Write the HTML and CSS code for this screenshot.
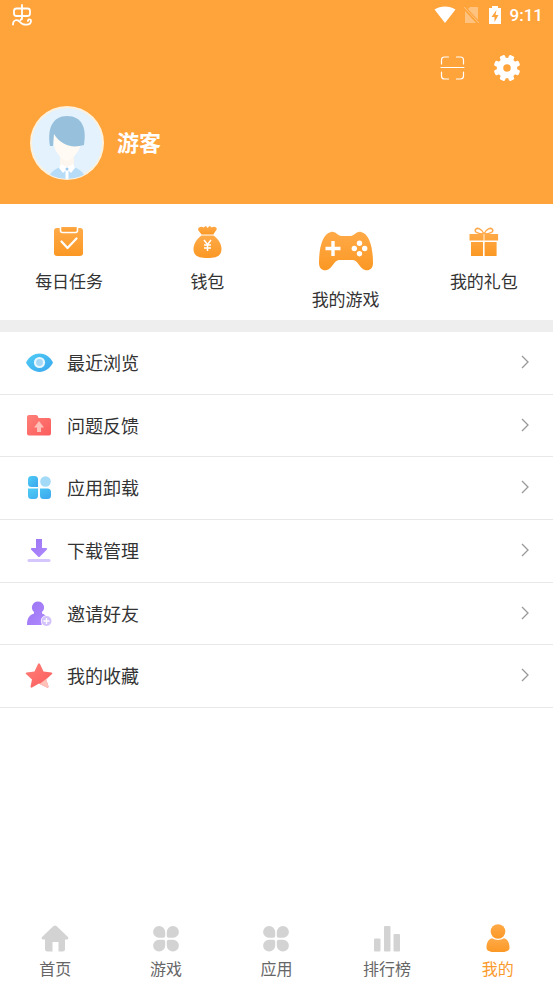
FILE: index.html
```html
<!DOCTYPE html>
<html lang="zh-CN">
<head>
<meta charset="utf-8">
<meta name="viewport" content="width=device-width, initial-scale=1">
<title>我的</title>
<link rel="stylesheet" href="styles.css">
</head>
<body>
<svg class="defs" width="0" height="0" aria-hidden="true">
  <defs>
    <linearGradient id="orange" x1="0" y1="0" x2="0" y2="1"><stop offset="0" stop-color="#ffaa48"/><stop offset="1" stop-color="#fb9824"/></linearGradient>
    <linearGradient id="blue" x1="0" y1="0" x2="1" y2="1"><stop offset="0" stop-color="#4fcdf5"/><stop offset="1" stop-color="#3ba6ee"/></linearGradient>
    <linearGradient id="red" x1="0" y1="0" x2="1" y2="1"><stop offset="0" stop-color="#ff8078"/><stop offset="1" stop-color="#fb5c5c"/></linearGradient>
    <linearGradient id="purple" x1="0" y1="0" x2="1" y2="1"><stop offset="0" stop-color="#9b74f2"/><stop offset="1" stop-color="#b08aff"/></linearGradient>
  </defs>
</svg>

<header class="header">
  <div class="status">
    <svg width="22" height="24" viewBox="0 0 22 24" fill="none" stroke="#fff" stroke-width="1.800" stroke-linecap="round" stroke-linejoin="round">
      <rect x="3" y="5.500" width="16" height="7.500" rx="2.500"/>
      <path d="M11 2v14M2 21.500c0-5 4.500-5.500 7-2.500 3 4 11 3.500 11-1 0-2.500-3.500-2-3 0M11 15.500l-1.500 1.500"/>
    </svg>
    <div class="status-right">
      <svg width="22" height="20" viewBox="0 0 22 20"><path d="M0.500 4.500C6.500 0.500 15.500 0.500 21.500 4.500L11 18Z" fill="#fff"/></svg>
      <svg width="16" height="20" viewBox="0 0 16 20"><path d="M6 2h8v13L4 4ZM1 6l11 12H1Z" fill="#fff" opacity=".35"/><path d="M0 2l15 16" stroke="#fff" stroke-width="1" opacity=".35"/></svg>
      <svg width="14" height="20" viewBox="0 0 14 20"><path d="M4 1h6v2h3v16H1V3h3Z" fill="#fff"/><path d="M8.500 5L3.500 12h3v5l4-7h-3Z" fill="#ffa33b"/></svg>
      <span class="clock">9:11</span>
    </div>
  </div>
  <div class="tools">
    <button class="icon-button" type="button" aria-label="扫一扫">
      <svg width="26" height="26" viewBox="0 0 26 26" fill="none" stroke="#fff" stroke-width="1.200" stroke-linecap="round">
        <path d="M2.500 9V5q0-3 3-3h4M17.500 2h4q3 0 3 3v4M24.500 17v4q0 3-3 3h-4M9.500 24h-4q-3 0-3-3v-4M2 12.500h23"/>
      </svg>
    </button>
    <button class="icon-button" type="button" aria-label="设置">
      <svg width="28" height="28" viewBox="-14 -14 28 28" fill="#fff">
        <circle r="7" fill="none" stroke="#fff" stroke-width="6.500"/>
        <g id="teeth" transform="rotate(22.500)"><rect x="-2.800" y="-13.300" width="5.600" height="6" rx="1.600"/><rect x="-2.800" y="7.300" width="5.600" height="6" rx="1.600"/><rect x="-13.300" y="-2.800" width="6" height="5.600" rx="1.600"/><rect x="7.300" y="-2.800" width="6" height="5.600" rx="1.600"/></g>
        <use href="#teeth" transform="rotate(45)"/>
      </svg>
    </button>
  </div>
  <div class="profile">
    <svg class="avatar" width="74" height="74" viewBox="0 0 74 74">
      <clipPath id="face"><circle cx="37" cy="37" r="36"/></clipPath>
      <circle cx="37" cy="37" r="37" fill="#fdf1dc"/>
      <circle cx="37" cy="37" r="35" fill="#e3f2fd"/>
      <g clip-path="url(#face)">
        <path d="M30 46h14v16H30Z" fill="#fcf6ee"/>
        <path d="M23 28q0 15 5 20 5 7 9 7t9-7q5-5 6-18L40 20Z" fill="#fffaf3"/>
        <path d="M20 40C17 22 23 10 37 10c15 0 20 12 17 29-13 4-24-1-30-11l-1 12Z" fill="#97c0dd"/>
        <path d="M19 70q4-7 12-9l6 5 6-5q8 2 12 9-6 5-18 5t-18-5Z" fill="#b7dcf8"/>
        <path d="M31 58l6 3 6-3 2 4-4 5-4-4-4 4-4-5Z" fill="#fff"/>
        <path d="M37 63v11" stroke="#fff" stroke-width="3"/>
        <circle cx="37" cy="63" r="1.500" fill="#9dcbed"/>
      </g>
    </svg>
    <h1 class="name">游客</h1>
  </div>
</header>

<main class="main">
  <nav class="actions" aria-label="快捷入口">
    <a class="action" href="#tasks">
      <svg width="36" height="36" viewBox="0 0 36 36">
        <rect x="3" y="4" width="29" height="28" rx="3" fill="url(#orange)"/>
        <path d="M9.500 3v3.500q0 2 2 2h13q2 0 2-2V3" fill="url(#orange)" stroke="#fff" stroke-width="1.600"/>
        <path d="M10.500 17.500l6 6.500 9-9.500" fill="none" stroke="#fff" stroke-width="2.200" stroke-linecap="round" stroke-linejoin="round"/>
      </svg>
      <span>每日任务</span>
    </a>
    <a class="action" href="#wallet">
      <svg width="36" height="36" viewBox="0 0 36 36">
        <path d="M12.500 10.500C11 8 8 6 9.500 4q2.500-2 5.500-.5.500-1.500 2-1.500l1.500 2L20.500 2q1.500 0 2 1.500 3-1.500 5 .5c1 2-2 4-3 6.500Z" fill="url(#orange)"/>
        <path d="M12.500 11.500h12c4.500 3 8 8.500 8 13.500 0 7-5 9-14 9s-14-2-14-9c0-5 3.500-10.500 8-13.500Z" fill="url(#orange)"/>
        <path d="M15 16l3.500 4.500L22 16M18.500 20.500V27M15 21h7M15 24h7" fill="none" stroke="#fff" stroke-width="1.500"/>
      </svg>
      <span>钱包</span>
    </a>
    <a class="action" href="#games">
      <svg width="56" height="54" viewBox="0 0 56 54">
        <path d="M13 8c4-1 6 3 10 4h10c4-1 6-5 10-4 9 2 12 17 12 31 0 6-4 8-8 7-5-1-7-10-12-10H21c-5 0-7 9-12 10-4 1-8-1-8-7C1 25 4 10 13 8Z" fill="url(#orange)"/>
        <path d="M15 17v15M7.500 24.500h15" stroke="#fff" stroke-width="3.400"/>
        <g fill="#fff"><circle cx="41.500" cy="19.300" r="2.700"/><circle cx="41.500" cy="29.700" r="2.700"/><circle cx="36.300" cy="24.500" r="2.700"/><circle cx="46.700" cy="24.500" r="2.700"/></g>
      </svg>
      <span>我的游戏</span>
    </a>
    <a class="action" href="#gifts">
      <svg width="36" height="36" viewBox="0 0 36 36">
        <path d="M18 10C12 10 8 8 9.500 5.500S16 5 18 10c2-5 7-7 8.500-4.500S24 10 18 10Z" fill="none" stroke="#ffa94a" stroke-width="1.500"/>
        <path d="M3.500 10H17v6.500H3.500ZM18.600 10h13.500v6.500H18.600ZM5 18h12v14H5ZM18.600 18h12v14h-12Z" fill="url(#orange)"/>
        <path d="M17 10h2v6.500h-2Z" fill="#ffcb8c"/>
      </svg>
      <span>我的礼包</span>
    </a>
  </nav>

  <ul class="menu">
    <li><a class="row" href="#recent">
      <svg width="28" height="28" viewBox="0 0 28 28"><path d="M1 14.500C7 2.500 22 2.500 28 14.500 22 27 7 27 1 14.500Z" fill="url(#blue)"/><circle cx="14.500" cy="14.500" r="5.600" fill="#e9f7fe"/><circle cx="14.500" cy="14.500" r="3.400" fill="#a5d8f7"/></svg>
      <span>最近浏览</span><svg class="chevron" width="10" height="16" viewBox="0 0 10 16"><path d="M2 2l6 6-6 6"/></svg></a></li>
    <li><a class="row" href="#feedback">
      <svg width="28" height="28" viewBox="0 0 28 28"><path d="M2 6q0-2 2-2h7q1.500 0 2 1.500l.5 1.500H24q2 0 2 2v13.500q0 2-2 2H4q-2 0-2-2Z" fill="url(#red)"/><path d="M14 10l5 6.500h-3V21h-4v-4.500H9Z" fill="#ffc0b9"/></svg>
      <span>问题反馈</span><svg class="chevron" width="10" height="16" viewBox="0 0 10 16"><path d="M2 2l6 6-6 6"/></svg></a></li>
    <li><a class="row" href="#uninstall">
      <svg width="28" height="28" viewBox="0 0 28 28" fill="url(#blue)"><path d="M6.500 3h3q3.500 0 3.500 3.500V14H6.500Q3 14 3 10.500v-4Q3 3 6.500 3Z"/><circle cx="20.500" cy="8.500" r="5.300" fill="#a3daf8"/><path d="M3 15.500h10v7q0 3.500-3.500 3.500h-3Q3 26 3 22.500ZM15 15.500h7.500q3.500 0 3.500 3.500v3.500q0 3.500-3.500 3.500h-4Q15 26 15 22.500Z"/></svg>
      <span>应用卸载</span><svg class="chevron" width="10" height="16" viewBox="0 0 10 16"><path d="M2 2l6 6-6 6"/></svg></a></li>
    <li><a class="row" href="#downloads">
      <svg width="28" height="28" viewBox="0 0 28 28"><path d="M11 3h6v9h4q2 0 .5 2L15 20.500q-1 1-2 0L6.500 14q-1.500-2 .5-2h4Z" fill="url(#purple)"/><rect x="2.500" y="23" width="23" height="3" rx="1.500" fill="#d5c6fb"/></svg>
      <span>下载管理</span><svg class="chevron" width="10" height="16" viewBox="0 0 10 16"><path d="M2 2l6 6-6 6"/></svg></a></li>
    <li><a class="row" href="#invite">
      <svg width="28" height="28" viewBox="0 0 28 28"><path d="M13 2.500a6 6 0 0 1 4 10.500v1.500c3 1 6 3.500 6 6L16 26H2c0-6 2-10 7-11.500V13a6 6 0 0 1 4-10.500Z" fill="url(#purple)"/><circle cx="21.500" cy="22" r="5.700" fill="#fff"/><circle cx="21.500" cy="22" r="5" fill="#d2c1fa"/><path d="M21.500 19v6M18.500 22h6" stroke="#fff" stroke-width="1.300"/></svg>
      <span>邀请好友</span><svg class="chevron" width="10" height="16" viewBox="0 0 10 16"><path d="M2 2l6 6-6 6"/></svg></a></li>
    <li><a class="row" href="#favorites">
      <svg width="28" height="28" viewBox="0 0 28 28"><path d="M13 3q1-1.500 2 0l3.500 7.500 8 1q1.500.5.500 1.500L21 18.500l2.500 7q0 1.500-1.500 1l-8-4-7 4q-1.500.5-1.500-1l1.500-7-6-5.500q-1-1 .5-1.500l8-1Z" fill="url(#red)"/><path d="M23 16.500l-1.500 2 2 7q0 1.500-1.500 1l-7.500-3.500Z" fill="#ffc1b8"/></svg>
      <span>我的收藏</span><svg class="chevron" width="10" height="16" viewBox="0 0 10 16"><path d="M2 2l6 6-6 6"/></svg></a></li>
  </ul>
</main>

<nav class="tabs" aria-label="主导航">
  <a class="tab" href="#home">
    <svg width="28" height="28" viewBox="0 0 28 28"><path d="M12.500 2q1.500-1 3 0L27 13q1 2-1 2.500h-2V25q0 2.500-2.500 2.500h-4V18h-6v9.500h-5Q4 27.500 4 25v-9.500H2q-2-.5-1-2.500Z" fill="#d3d3d3"/></svg>
    <span>首页</span></a>
  <a class="tab" href="#game">
    <svg width="28" height="28" viewBox="0 0 28 28" fill="#d3d3d3"><path id="petal" d="M7 2a6 6 0 0 1 6.200 6v4q0 1.800-1.800 1.800H7A5.900 5.900 0 0 1 7 2Z"/><use href="#petal" transform="matrix(-1 0 0 1 28 0)"/><use href="#petal" transform="matrix(1 0 0 -1 0 29.500)"/><use href="#petal" transform="matrix(-1 0 0 -1 28 29.500)"/></svg>
    <span>游戏</span></a>
  <a class="tab" href="#apps">
    <svg width="28" height="28" viewBox="0 0 28 28" fill="#d3d3d3"><use href="#petal"/><use href="#petal" transform="matrix(-1 0 0 1 28 0)"/><use href="#petal" transform="matrix(1 0 0 -1 0 29.500)"/><use href="#petal" transform="matrix(-1 0 0 -1 28 29.500)"/></svg>
    <span>应用</span></a>
  <a class="tab" href="#rank">
    <svg width="28" height="28" viewBox="0 0 28 28" fill="#d3d3d3"><rect x="1" y="14.500" width="6.500" height="13" rx="1"/><rect x="11" y="2" width="6.500" height="25.500" rx="1"/><rect x="20.500" y="10" width="6.500" height="17.500" rx="1"/></svg>
    <span>排行榜</span></a>
  <a class="tab active" href="#me" aria-current="page">
    <svg width="28" height="28" viewBox="0 0 28 28" fill="url(#orange)"><circle cx="14" cy="7.500" r="7.300"/><path d="M8 14.300q6 3.500 12 0c4 1 5.500 5 5.500 9.700 0 3-4 4.500-11.500 4.500S2.500 27 2.500 24c0-4.700 1.500-8.700 5.500-9.700Z"/></svg>
    <span>我的</span></a>
</nav>
</body>
</html>
```
FILE: styles.css
```css
* {
  box-sizing: border-box;
}

body {
  display: flex;
  flex-direction: column;
  min-height: 100vh;
  margin: 0;
  background: #fff;
  color: #333;
  font-family: "Noto Sans CJK SC", sans-serif;
}

a {
  color: inherit;
  text-decoration: none;
}

svg {
  display: block;
  flex: none;
}

.defs {
  position: absolute;
}

.header {
  background: #ffa33b;
  color: #fff;
}

.status {
  display: flex;
  align-items: center;
  justify-content: space-between;
  height: 30px;
  padding: 0 10px 0 11px;
}

.status-right {
  display: flex;
  align-items: center;
  gap: 8px;
}

.clock {
  font: 500 17px/30px Roboto, sans-serif;
}

.tools {
  display: flex;
  align-items: center;
  justify-content: flex-end;
  gap: 28px;
  height: 76px;
  padding: 0 32px;
}

.icon-button {
  padding: 0;
  border: 0;
  background: none;
}

.profile {
  display: flex;
  align-items: center;
  gap: 13px;
  padding: 0 30px 24px;
}

.name {
  margin: 0;
  padding-bottom: 4px;
  font-size: 22px;
  font-weight: 700;
  line-height: 32px;
}

.actions {
  display: grid;
  grid-template-columns: repeat(4, 1fr);
  padding: 20px 0 8px;
  border-bottom: 12px solid #eee;
}

.action {
  display: flex;
  flex-direction: column;
  align-items: center;
  gap: 8px;
  font-size: 17px;
  line-height: 26px;
}

.menu {
  display: flex;
  flex-direction: column;
  min-height: 376px;
  margin: 0;
  padding: 0;
  list-style: none;
}

.menu li {
  display: flex;
  flex: 1;
  border-bottom: 1px solid #e8e8e8;
}

.row {
  display: flex;
  flex: 1;
  align-items: center;
  gap: 14px;
  padding: 0 23px 2px 25px;
  font-size: 18px;
  line-height: 28px;
}

.chevron {
  margin-left: auto;
  fill: none;
  stroke: #999;
  stroke-width: 1.3;
}

.tabs {
  display: grid;
  grid-template-columns: repeat(5, 1fr);
  margin-top: auto;
  padding-bottom: 3px;
}

.tab {
  display: flex;
  flex-direction: column;
  align-items: center;
  gap: 4px;
  color: #666;
  font-size: 16px;
  line-height: 24px;
}

.active {
  color: #fa9a2c;
}
```
